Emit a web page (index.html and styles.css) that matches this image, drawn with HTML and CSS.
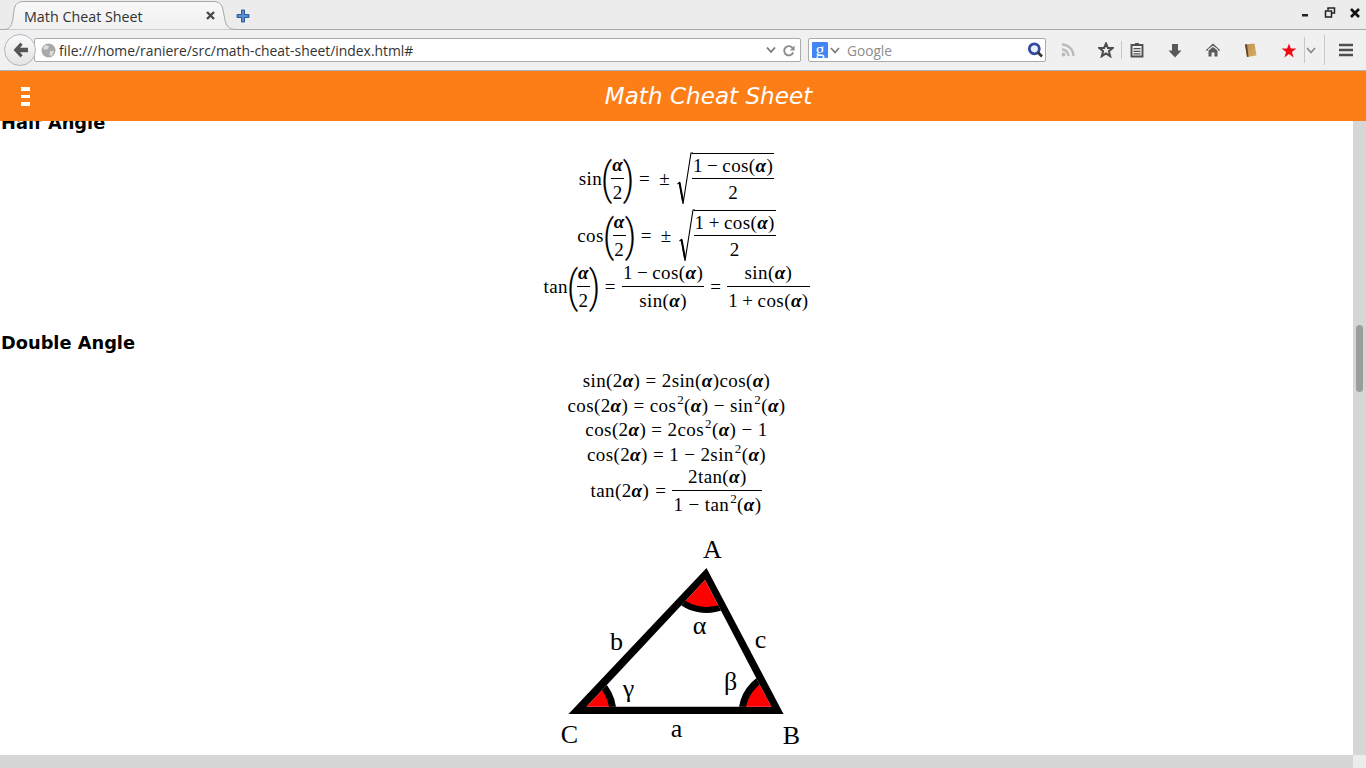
FILE: index.html
```html
<!DOCTYPE html>
<html lang="en">
<head>
<meta charset="utf-8">
<title>Math Cheat Sheet</title>
<link rel="stylesheet" href="styles.css">
</head>
<body>
<div class="browser">
  <div class="tabbar">
    <div class="tab">
      <svg class="tab-shape" width="240" height="30" viewBox="0 0 240 30"><defs><linearGradient id="tabfill" x1="0" y1="0" x2="0" y2="1"><stop offset="0" stop-color="#f8f8f8"/><stop offset="1" stop-color="#f0f0f0"/></linearGradient></defs><path d="M0 29.500H4C10 29.500 12 25 13 18L14 10C15 4 18 1.500 24 1.500H213C219 1.500 222 4 223 10L225 20C226 26 229 29.500 236 29.500H240" fill="url(#tabfill)" stroke="#a8a8a8"/></svg>
      <span class="tab-title">Math Cheat Sheet</span>
      <svg class="tab-close" width="9" height="9" viewBox="0 0 9 9"><path d="M1 1L8 8M8 1L1 8" stroke="#4a4a4a" stroke-width="2.400"/></svg>
    </div>
    <svg class="tab-new" width="14" height="14" viewBox="0 0 14 14"><path d="M5.500 1H8.500V5.500H13V8.500H8.500V13H5.500V8.500H1V5.500H5.500Z" fill="#5b8fd0" stroke="#2c5a99"/></svg>
    <div class="winctl">
      <svg class="w-min" width="12" height="12" viewBox="0 0 12 12"><rect x="1" y="7" width="6" height="2.500" fill="#222"/></svg>
      <svg class="w-max" width="12" height="12" viewBox="0 0 12 12"><path d="M4 3V1H10.500V6H8M1.500 4H7.500V10H1.500Z" fill="none" stroke="#222" stroke-width="1.500"/></svg>
      <svg class="w-close" width="12" height="12" viewBox="0 0 12 12"><path d="M2 2L10 10M10 2L2 10" stroke="#111" stroke-width="2.600"/></svg>
    </div>
  </div>
  <div class="navbar">
    <div class="back">
      <svg width="15" height="16" viewBox="0 0 14 15"><path d="M7 0.500L0.500 7.500L7 14.500L9 12.500L6.500 9.500H14V5.500H6.500L9 2.500Z" fill="#555"/></svg>
    </div>
    <div class="urlbar">
      <svg class="globe" width="15" height="15" viewBox="0 0 15 15"><circle cx="7.500" cy="7.500" r="7" fill="#a9a9a9"/><path d="M4 2L8 3L7 6L3.500 7L2 5ZM9 8L13 8L11 13L8.500 12Z" fill="#dcdcdc"/></svg>
      <span class="url">file:///home/raniere/src/math-cheat-sheet/index.html#</span>
      <svg class="url-drop" width="10" height="8" viewBox="0 0 10 8"><path d="M1 1.500L5 6L9 1.500" fill="none" stroke="#777" stroke-width="1.800"/></svg>
      <svg class="url-reload" width="12" height="13" viewBox="0 0 13 13"><path d="M10.500 4A5 5 0 1 0 11 8.500" fill="none" stroke="#8b8b8b" stroke-width="2"/><path d="M12.500 1V6.500H7.500Z" fill="#8b8b8b"/></svg>
    </div>
    <div class="searchbar">
      <span class="engine"><span class="engine-g">g</span></span>
      <svg class="search-drop" width="10" height="7" viewBox="0 0 10 7"><path d="M1 1L5 5.500L9 1" fill="none" stroke="#777" stroke-width="1.600"/></svg>
      <span class="search-text">Google</span>
      <svg class="search-go" width="17" height="16" viewBox="0 0 16 16"><circle cx="6.800" cy="6.800" r="5" fill="#e8effa" stroke="#2f4a9a" stroke-width="2.800"/><path d="M10.500 10.500L14.500 14.500" stroke="#333" stroke-width="2.600"/></svg>
    </div>
    <div class="tools">
      <svg class="t-rss" width="14" height="14" viewBox="0 0 14 14"><circle cx="2.500" cy="11.500" r="2" fill="#bbb"/><path d="M1 6.500A6.500 6.500 0 0 1 7.500 13M1 1.500A11.500 11.500 0 0 1 12.500 13" fill="none" stroke="#bbb" stroke-width="2.300"/></svg>
      <svg class="t-star" width="16" height="16" viewBox="0 0 16 16"><path d="M8 1.500L9.900 6H14.700L10.900 9.200L12.200 14.200L8 11.400L3.800 14.200L5.100 9.200L1.300 6H6.100Z" fill="none" stroke="#4d4d4d" stroke-width="2"/></svg>
      <span class="t-sep"></span>
      <svg class="t-list" width="14" height="16" viewBox="0 0 14 16"><path d="M1.500 3H12.500V14.500H1.500Z" fill="none" stroke="#505050" stroke-width="1.900"/><path d="M5 1H9V4H5ZM3.500 6H10.500V7.300H3.500ZM3.500 8.700H10.500V10H3.500ZM3.500 11.300H10.500V12.600H3.500Z" fill="#505050"/></svg>
      <svg class="t-down" width="14" height="15" viewBox="0 0 14 15"><path d="M4 1H10V7.500H13.500L7 14.500L0.500 7.500H4Z" fill="#5a5a5a"/></svg>
      <svg class="t-home" width="16" height="14" viewBox="0 0 16 14"><path d="M8 0.500L15.500 7.500H13V6.300L8 2.500L3 6.300V7.500H0.500Z" fill="#505050"/><path d="M3.500 7.500L8 4L12.500 7.500V13.500H9.500V9.500H6.500V13.500H3.500Z" fill="#5a5a5a"/></svg>
      <svg class="t-book" width="13" height="15" viewBox="0 0 13 15"><defs><linearGradient id="bookfill" x1="0" y1="0" x2="1" y2="1"><stop offset="0" stop-color="#b89150"/><stop offset="1" stop-color="#dcb066"/></linearGradient></defs><path d="M1 1.500L10.500 0.500L12.500 12.500L3 14Z" fill="url(#bookfill)"/><path d="M1 1.500L3 1.300L4.500 13.800L3 14Z" fill="#5b4220"/></svg>
      <svg class="t-red" width="16" height="15" viewBox="0 0 16 15"><path d="M8 0.500L9.900 5.600H15.400L10.900 8.900L12.600 14.400L8 11L3.400 14.400L5.100 8.900L0.600 5.600H6.100Z" fill="#f00a14"/></svg>
      <span class="t-sep t-sep-a"></span>
      <svg class="t-more" width="10" height="7" viewBox="0 0 10 7"><path d="M1 1L5 5.500L9 1" fill="none" stroke="#888" stroke-width="1.700"/></svg>
      <span class="t-sep t-sep-b"></span>
      <svg class="t-menu" width="16" height="14" viewBox="0 0 16 14"><path d="M1 2H15M1 7H15M1 12H15" stroke="#4f4f4f" stroke-width="2.400"/></svg>
    </div>
  </div>
  <div class="viewport">
    <header class="appbar">
      <div class="burger"><i></i><i></i><i></i></div>
      <h1 class="apptitle">Math Cheat Sheet</h1>
    </header>
    <div class="pagearea">
      <main class="page">
        <h3 class="sec sec-first">Half Angle</h3>
        <div class="eqblock">
          <div class="eq eq-tall">
            <span>sin</span>
            <span class="paren">(</span><span class="frac frac-small"><span class="num"><i>α</i></span><span class="den">2</span></span><span class="paren">)</span>
            <span class="op op-wide">=</span><span class="pm">±</span>
            <svg class="radical" width="16" height="54" viewBox="0 0 16 54"><path d="M0.500 32L2.500 30.500L6 52L14 1H16" fill="none" stroke="#000" stroke-width="1.100"/><path d="M2.500 30.500L6 49" stroke="#000" stroke-width="2"/></svg>
            <span class="frac frac-root"><span class="num">1 − cos(<b>α</b>)</span><span class="den">2</span></span>
          </div>
          <div class="eq eq-tall">
            <span>cos</span>
            <span class="paren">(</span><span class="frac frac-small"><span class="num"><i>α</i></span><span class="den">2</span></span><span class="paren">)</span>
            <span class="op op-wide">=</span><span class="pm">±</span>
            <svg class="radical" width="16" height="54" viewBox="0 0 16 54"><path d="M0.500 32L2.500 30.500L6 52L14 1H16" fill="none" stroke="#000" stroke-width="1.100"/><path d="M2.500 30.500L6 49" stroke="#000" stroke-width="2"/></svg>
            <span class="frac frac-root"><span class="num">1 + cos(<b>α</b>)</span><span class="den">2</span></span>
          </div>
          <div class="eq eq-last">
            <span>tan</span>
            <span class="paren">(</span><span class="frac frac-small"><span class="num"><i>α</i></span><span class="den">2</span></span><span class="paren">)</span>
            <span class="op">=</span>
            <span class="frac"><span class="num">1 − cos(<b>α</b>)</span><span class="den">sin(<b>α</b>)</span></span>
            <span class="op">=</span>
            <span class="frac"><span class="num">sin(<b>α</b>)</span><span class="den">1 + cos(<b>α</b>)</span></span>
          </div>
        </div>
        <h3 class="sec">Double Angle</h3>
        <div class="eqblock eqblock-double">
          <div class="eq eq-line">sin(2<b>α</b>) = 2sin(<b>α</b>)cos(<b>α</b>)</div>
          <div class="eq eq-line">cos(2<b>α</b>) = cos<sup>2</sup>(<b>α</b>) − sin<sup>2</sup>(<b>α</b>)</div>
          <div class="eq eq-line">cos(2<b>α</b>) = 2cos<sup>2</sup>(<b>α</b>) − 1</div>
          <div class="eq eq-line">cos(2<b>α</b>) = 1 − 2sin<sup>2</sup>(<b>α</b>)</div>
          <div class="eq eq-fracline">
            <span>tan(2<b>α</b>)</span><span class="op">=</span>
            <span class="frac"><span class="num">2tan(<b>α</b>)</span><span class="den">1 − tan<sup>2</sup>(<b>α</b>)</span></span>
          </div>
        </div>
        <svg class="triangle" width="260" height="225" viewBox="546.500 531 260 225">
          <defs><clipPath id="inner"><path d="M704.500 580L770.700 706.700H586Z"/></clipPath></defs>
          <path d="M706 568L783 714H568Z" fill="#000"/>
          <path d="M704.500 580L770.700 706.700H586Z" fill="#fff"/>
          <g clip-path="url(#inner)">
            <circle cx="706" cy="568" r="42" fill="#f00" stroke="#000" stroke-width="6"/>
            <circle cx="783" cy="714" r="41.500" fill="#f00" stroke="#000" stroke-width="7"/>
            <circle cx="568" cy="714" r="44.500" fill="#f00" stroke="#000" stroke-width="7"/>
          </g>
          <text class="tri-label" x="712" y="558">A</text>
          <text class="tri-label" x="616" y="650">b</text>
          <text class="tri-label" x="760" y="648">c</text>
          <text class="tri-label" x="699" y="634">α</text>
          <text class="tri-label" x="730" y="690">β</text>
          <text class="tri-label" x="628" y="697">γ</text>
          <text class="tri-label" x="569" y="743">C</text>
          <text class="tri-label" x="676" y="737">a</text>
          <text class="tri-label" x="791" y="744">B</text>
        </svg>
      </main>
      <div class="vscroll"><div class="vthumb"></div></div>
    </div>
    <div class="hscroll"><div class="corner"></div></div>
  </div>
</div>
</body>
</html>
```

FILE: styles.css
```css
* { box-sizing: border-box; }
html, body { margin: 0; padding: 0; height: 100%; overflow: hidden; background: #fff; }
.browser { width: 1366px; height: 768px; display: flex; flex-direction: column; overflow: hidden; }

.tabbar { height: 30px; flex: none; background: #ececec; border-bottom: 1px solid #a8a8a8; display: flex; align-items: flex-start; position: relative; }
.tab { position: relative; width: 226px; height: 30px; flex: none; display: flex; align-items: center; padding: 3px 0 0 24px; }
.tab-shape { position: absolute; left: 0; top: 0; }
.tab-title { position: relative; font: 14.300px/20px "Open Sans", sans-serif; color: #333; width: 182px; white-space: nowrap; }
.tab-close { position: relative; margin-top: -2px; }
.tab-new { margin: 9px 0 0 10px; }
.winctl { margin-left: auto; display: flex; padding: 7px 5px 0 0; }
.w-max { margin-left: 11px; }
.w-close { margin-left: 13px; }

.navbar { height: 41px; flex: none; background: #f0f0f0; border-bottom: 1px solid #a9b4bc; display: flex; align-items: center; position: relative; }
.back { position: absolute; left: 4px; top: 4px; width: 32px; height: 32px; border-radius: 50%; background: linear-gradient(#fafafa, #e4e4e4); border: 1px solid #b0b6c0; display: flex; align-items: center; justify-content: center; z-index: 1; }
.urlbar { margin-left: 34px; width: 767px; height: 24px; background: #fff; border: 1px solid #ababab; border-radius: 2px; display: flex; align-items: center; padding: 0 5px 0 6px; }
.globe { flex: none; }
.url { font: 13.900px/20px "Open Sans", sans-serif; color: #333; margin: 1px 0 0 3px; flex: 1; white-space: nowrap; }
.url-drop { margin-right: 7px; flex: none; }
.url-reload { flex: none; }
.searchbar { margin-left: 7px; width: 238px; height: 24px; background: #fff; border: 1px solid #ababab; border-radius: 2px; display: flex; align-items: center; padding: 0 1px 0 3px; }
.engine { width: 16px; height: 16px; background: #4285f4; border-radius: 1px; display: flex; align-items: center; justify-content: center; flex: none; }
.engine-g { color: #fff; font: 18px/16px "Liberation Serif", serif; }
.search-drop { margin-left: 2px; flex: none; }
.search-text { font: 13.700px/20px "Open Sans", sans-serif; color: #8c8c8c; margin: 1px 0 0 7px; flex: 1; }
.tools { position: relative; flex: 1; display: flex; align-items: center; height: 100%; }
.tools svg { flex: none; }
.t-rss { margin-left: 15px; }
.t-star { margin-left: 23px; }
.t-sep { width: 1px; height: 18px; background: #c8c8c8; margin-left: 7px; flex: none; }
.t-list { margin-left: 8px; }
.t-down { margin-left: 24px; }
.t-home { margin-left: 23px; }
.t-book { margin-left: 23px; }
.t-red { margin-left: 24px; }
.t-sep-a { height: 26px; }
.t-more { margin-left: 1px; }
.t-sep-b { height: 30px; margin-left: 8px; }
.t-menu { margin-left: 13px; }

.viewport { position: relative; flex: 1; min-height: 0; display: flex; flex-direction: column; }
.appbar { position: absolute; left: 0; top: 0; width: 100%; height: 50px; background: #fd7e17; z-index: 2; display: flex; align-items: center; justify-content: center; padding-left: 51px; }
.burger { position: absolute; left: 21px; top: 16px; display: flex; flex-direction: column; gap: 4px; }
.burger i { display: block; width: 9px; height: 3.500px; background: #fff; }
.apptitle { margin: 0; font: italic 400 23.100px/30px "DejaVu Sans", sans-serif; color: #fff; }

.pagearea { flex: 1; min-height: 0; display: flex; }
.page { flex: 1; min-width: 0; overflow: hidden; display: flex; flex-direction: column; align-items: stretch; }
.sec { margin: 21.500px 0 0; flex: none; font: 700 17.800px/24px "DejaVu Sans", sans-serif; color: #000; padding-left: 1px; }
.sec-first { margin-top: 40px; }
.eqblock { flex: none; display: flex; flex-direction: column; align-items: center; margin-top: 15.500px; font: 19px/24px "Liberation Serif", serif; color: #000; letter-spacing: 0.4px; word-spacing: -1px; }
.eqblock-double { margin-top: 14px; word-spacing: 0; }
.eq { display: flex; align-items: center; justify-content: center; white-space: pre; }
.eq-tall { height: 57px; }
.eq-last { height: 45px; }
.eq-line { display: block; height: 24.500px; line-height: 24.500px; }
.eq-fracline { height: 48.500px; }
.eq b { font-weight: 700; font-style: italic; }
.eq sup { font-size: 13px; line-height: 0; vertical-align: 8px; margin-left: 1px; }
.frac { display: inline-flex; flex-direction: column; align-items: stretch; text-align: center; }
.num { display: block; line-height: 26px; border-bottom: 1px solid #000; padding: 0 1px; }
.den { display: block; line-height: 28px; padding: 0 1px; }
.frac-small .num i { font-weight: 700; }
.frac-root .num { border-top: 1px solid #000; line-height: 24px; }
.frac-root .den { line-height: 24px; padding-top: 2px; }
.paren { font-family: Roboto, sans-serif; font-size: 44px; font-weight: 300; line-height: 48px; transform: scaleX(0.8); width: 9px; display: flex; justify-content: center; letter-spacing: 0; }
.op { padding: 0 6px; }
.op-wide { padding: 0 7px 0 6px; }
.pm { padding: 0 7px 0 2px; }
.radical { flex: none; margin-right: -1px; }
.triangle { display: block; flex: none; margin: 15.500px auto 0; }
.tri-label { font: 26px "Liberation Serif", serif; text-anchor: middle; fill: #000; }

.vscroll { width: 13px; flex: none; background: #d6d6d6; padding: 254px 3px 0; }
.vthumb { width: 7px; height: 67px; background: #9c9c9c; border-radius: 4px; }
.hscroll { height: 13px; flex: none; background: #d6d6d6; display: flex; justify-content: flex-end; }
.corner { width: 13px; background: #ececec; }
```
